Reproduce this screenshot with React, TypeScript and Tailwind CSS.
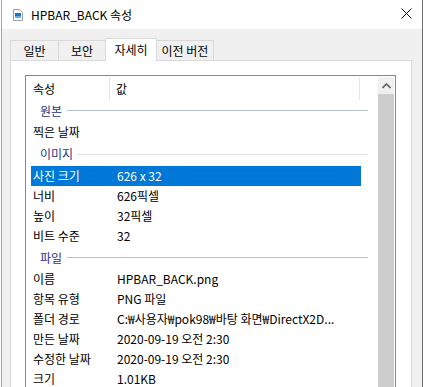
import React from 'react';

const font = { fontFamily: '"Noto Sans CJK KR", "Noto Sans", sans-serif' };

type Row =
    | { kind: 'group'; label: string; h: string; line: string }
    | { kind: 'item'; name: string; value: string; selected?: boolean; h: string };

const rows: Row[] = [
    { kind: 'group', label: '원본', h: 'h-[21px]', line: 'bg-[#b9c1d4]' },
    { kind: 'item', name: '찍은 날짜', value: '', h: 'h-[21px]' },
    { kind: 'group', label: '이미지', h: 'h-[24px]', line: 'bg-[#dcdfe6]' },
    { kind: 'item', name: '사진 크기', value: '626 x 32', selected: true, h: 'h-[20px]' },
    { kind: 'item', name: '너비', value: '626픽셀', h: 'h-[20px]' },
    { kind: 'item', name: '높이', value: '32픽셀', h: 'h-[20px]' },
    { kind: 'item', name: '비트 수준', value: '32', h: 'h-[20px]' },
    { kind: 'group', label: '파일', h: 'h-[23px]', line: 'bg-[#b8bade]' },
    { kind: 'item', name: '이름', value: 'HPBAR_BACK.png', h: 'h-[20px]' },
    { kind: 'item', name: '항목 유형', value: 'PNG 파일', h: 'h-[20px]' },
    { kind: 'item', name: '폴더 경로', value: 'C:₩사용자₩pok98₩바탕 화면₩DirectX2D...', h: 'h-[20px]' },
    { kind: 'item', name: '만든 날짜', value: '2020-09-19 오전 2:30', h: 'h-[20px]' },
    { kind: 'item', name: '수정한 날짜', value: '2020-09-19 오전 2:30', h: 'h-[20px]' },
    { kind: 'item', name: '크기', value: '1.01KB', h: 'h-[20px]' },
];

const FileIcon = () => (
    <svg width="10" height="12" viewBox="0 0 10 12">
        <path d="M0.5 0.5 H6.5 L9.5 3.5 V11.5 H0.5 Z" fill="#fff" stroke="#9aa3ad" />
        <rect x="2" y="4" width="6" height="5" fill="#1a73c8" />
        <rect x="2" y="7" width="6" height="2" fill="#5fb0f0" />
    </svg>
);

const App = () => {
    return (
        <div className="w-[423px] h-[387px] overflow-hidden flex bg-white text-[12px] leading-[16px] text-black" style={font}>
            <div className="w-px shrink-0 bg-white" />
            <div className="w-px shrink-0 bg-[#a6a6a6]" />
            <div className="flex-1 flex flex-col min-h-0">
                {/* title bar */}
                <div className="h-[29px] shrink-0 bg-white flex items-center relative">
                    <div className="ml-[11px] mt-[1px] flex"><FileIcon /></div>
                    <span className="ml-[8px]">HPBAR_BACK 속성</span>
                    <svg className="absolute left-[399px] top-[8px]" width="11" height="11" viewBox="0 0 11 11">
                        <path d="M0.5 0.5 L10.5 10.5 M10.5 0.5 L0.5 10.5" stroke="#111" strokeWidth="1" />
                    </svg>
                </div>

                <div className="flex-1 min-h-0 bg-[#f0f0f0] pt-[8px] pl-[8px]">
                    {/* tabs */}
                    <div className="flex items-end h-[23px]">
                        <div className="w-[48px] h-[20px] border-l border-t border-[#d9d9d9] flex items-center justify-center">일반</div>
                        <div className="w-[47px] h-[20px] border-l border-t border-[#d9d9d9] flex items-center justify-center">보안</div>
                        <div className="w-[52px] h-[23px] -mb-px relative z-10 bg-white border-x border-t border-[#d9d9d9] flex items-center justify-center pb-[1px]">자세히</div>
                        <div className="w-[57px] h-[20px] border-r border-t border-[#d9d9d9] flex items-center justify-center">이전 버전</div>
                    </div>

                    {/* panel */}
                    <div className="w-[402px] h-[400px] bg-white border border-[#d9d9d9] pt-[14px] pl-[14px]">
                        <div className="w-[371px] h-[400px] border border-[#828790] flex items-start">
                            <div className="w-[352px] pl-[5px]">
                                {/* header */}
                                <div className="h-[24px] flex pt-[1px]">
                                    <div className="w-[79px] flex items-center pl-[2px] border-r border-[#e5e5e5]">속성</div>
                                    <div className="w-[250px] flex items-center pl-[6px] border-r border-[#e5e5e5]">값</div>
                                </div>
                                {rows.map((r, i) =>
                                    r.kind === 'group' ? (
                                        <div key={i} className={`${r.h} w-[337px] flex items-center pl-[9px]`}>
                                            <span className="text-[#1e3287]">{r.label}</span>
                                            <div className={`ml-[5px] flex-1 h-px ${r.line}`} />
                                        </div>
                                    ) : (
                                        <div
                                            key={i}
                                            className={`${r.h} w-[330px] flex items-center ${r.selected ? 'bg-[#0078d7] text-white' : ''}`}
                                        >
                                            <span className="w-[86px] pl-[2px] whitespace-nowrap">{r.name}</span>
                                            <span className="whitespace-nowrap overflow-hidden">{r.value}</span>
                                        </div>
                                    )
                                )}
                            </div>
                            {/* scrollbar */}
                            <div className="w-[16px] shrink-0 flex flex-col pt-[1px]">
                                <div className="h-[17px] bg-[#f0f0f0] flex items-center justify-center">
                                    <svg width="9" height="6" viewBox="0 0 9 6">
                                        <path d="M0.5 5 L4.5 1 L8.5 5" fill="none" stroke="#606060" strokeWidth="1.6" />
                                    </svg>
                                </div>
                                <div className="h-[380px] bg-[#cdcdcd]" />
                            </div>
                        </div>
                    </div>
                </div>
            </div>
            <div className="w-px shrink-0 bg-[#6e6e6e]" />
        </div>
    );
};

export default App;
